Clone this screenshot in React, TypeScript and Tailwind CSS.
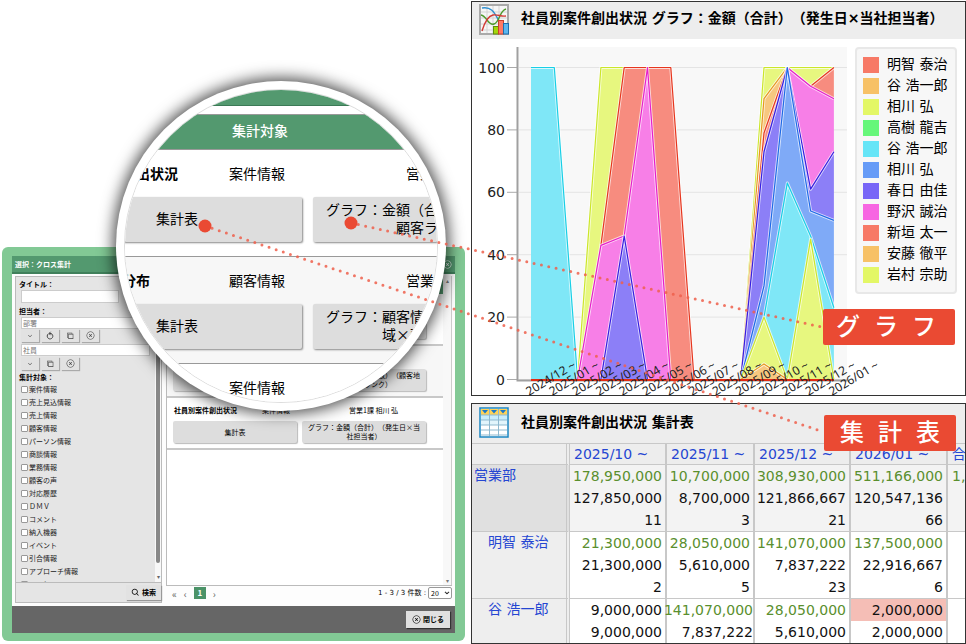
import { IoIosArrowDown } from "react-icons/io";
import { BiSearch } from "react-icons/bi";
import { VscChromeRestore } from "react-icons/vsc";
import { RxCrossCircled } from "react-icons/rx";

const targets = [
  "案件情報",
  "売上見込情報",
  "売上情報",
  "顧客情報",
  "パーソン情報",
  "商談情報",
  "業務情報",
  "顧客の声",
  "対応履歴",
  "ＤＭＶ",
  "コメント",
  "納入機器",
  "イベント",
  "引合情報",
  "アプローチ情報",
  "アンケート",
];

const reports = [
  {
    name: "顧客別案件創出状況",
    kind: "案件情報",
    owner: "営業1課 相川 弘",
    graph: ["グラフ：金額（合計）（当社担当×", "顧客ランク）"],
  },
  {
    name: "顧客ランク分布",
    kind: "顧客情報",
    owner: "営業1課 相川 弘",
    graph: ["グラフ：顧客情報（件数）（顧客地", "域×顧客ランク）"],
  },
  {
    name: "社員別案件創出状況",
    kind: "案件情報",
    owner: "営業1課 相川 弘",
    graph: ["グラフ：金額（合計）（発生日×当", "社担当者）"],
  },
];

const legend = [
  ["明智 泰治", "#f77966"],
  ["谷 浩一郎", "#f7c166"],
  ["相川 弘", "#e3f766"],
  ["高樹 龍吉", "#66f77a"],
  ["谷 浩一郎", "#66e5f7"],
  ["相川 弘", "#669bf7"],
  ["春日 由佳", "#7866f7"],
  ["野沢 誠治", "#f766e2"],
  ["新垣 太一", "#f77966"],
  ["安藤 徹平", "#f7c166"],
  ["岩村 宗助", "#e3f766"],
];

const months = [
  "2024/12", "2025/01", "2025/02", "2025/03", "2025/04", "2025/05", "2025/06",
  "2025/07", "2025/08", "2025/09", "2025/10", "2025/11", "2025/12", "2026/01",
];

type Point = [number, number];
type Area = { fill: string; stroke: string; top: Point[]; bottom: Point[] };

// top = upper edge (stroked), bottom = lower edge, both left to right
const areas: Area[] = [
  { fill: "#7fe7f7", stroke: "#18cfe6", top: [[0, 100], [1, 100], [2, 0]], bottom: [[0, 0], [2, 0]] },
  { fill: "#e7f77f", stroke: "#cbe62a", top: [[2, 0], [3, 100], [4, 100]], bottom: [[2, 0], [3, 43], [4, 100]] },
  { fill: "#f78c7f", stroke: "#e6361e", top: [[3, 43], [4, 100], [6, 100], [7, 0]], bottom: [[3, 43], [4, 46], [5, 100], [6, 0], [7, 0]] },
  { fill: "#f77fe7", stroke: "#e61ecb", top: [[2, 0], [3, 43], [4, 46], [5, 100], [6, 0]], bottom: [[2, 0], [6, 0]] },
  { fill: "#8c7ff7", stroke: "#361ee0", top: [[3, 0], [4, 46], [5, 0]], bottom: [[3, 0], [5, 0]] },
  { fill: "#e7f77f", stroke: "#cbe62a", top: [[9, 0], [10, 100], [13, 100]], bottom: [[9, 0], [10, 90], [11, 100], [12, 94], [13, 100]] },
  { fill: "#f7c87f", stroke: "#e6971e", top: [[9, 0], [10, 90], [11, 100]], bottom: [[9, 0], [10, 79], [11, 100]] },
  { fill: "#f78c7f", stroke: "#e6361e", top: [[9, 0], [10, 79], [11, 100]], bottom: [[9, 0], [10, 73], [11, 100]] },
  { fill: "#f78c7f", stroke: "#e6361e", top: [[12, 94], [13, 100]], bottom: [[12, 94], [13, 90]] },
  { fill: "#f77fe7", stroke: "#e61ecb", top: [[11, 100], [12, 94], [13, 90]], bottom: [[11, 100], [12, 61], [13, 73]] },
  { fill: "#8c7ff7", stroke: "#361ee0", top: [[9, 0], [10, 73], [11, 100], [12, 61], [13, 73]], bottom: [[9, 0], [10, 30], [11, 100], [12, 54], [13, 51]] },
  { fill: "#7faaf7", stroke: "#1e6ae6", top: [[9, 0], [10, 30], [11, 100], [12, 54], [13, 51]], bottom: [[9, 0], [10, 20], [11, 63], [12, 46], [13, 23]] },
  { fill: "#7fe7f7", stroke: "#18cfe6", top: [[10, 20], [11, 63], [12, 46], [13, 23]], bottom: [[10, 20], [11, 0], [12, 45], [13, 0]] },
  { fill: "#e7f77f", stroke: "#cbe62a", top: [[9, 0], [10, 20], [11, 0], [12, 45], [13, 0]], bottom: [[9, 0], [13, 0]] },
  { fill: "#f7c87f", stroke: "#e6971e", top: [[9, 0], [10, 5], [11, 0]], bottom: [[9, 0], [11, 0]] },
];

const px = (i: number) => 531 + i * 23.3;
const py = (v: number) => 379.5 - v * 3.12;
const toPoints = (pts: Point[]) => pts.map(([i, v]) => `${px(i)},${py(v)}`).join(" ");

const columns = ["2025/10 ~", "2025/11 ~", "2025/12 ~", "2026/01 ~"];
const rows = [
  {
    name: "営業部",
    cells: [
      ["178,950,000", "127,850,000", "11"],
      ["10,700,000", "8,700,000", "3"],
      ["308,930,000", "121,866,667", "21"],
      ["511,166,000", "120,547,136", "66"],
    ],
  },
  {
    name: "明智 泰治",
    cells: [
      ["21,300,000", "21,300,000", "2"],
      ["28,050,000", "5,610,000", "5"],
      ["141,070,000", "7,837,222", "23"],
      ["137,500,000", "22,916,667", "6"],
    ],
  },
  {
    name: "谷 浩一郎",
    cells: [
      ["9,000,000", "9,000,000"],
      ["141,070,000", "7,837,222"],
      ["28,050,000", "5,610,000"],
      ["2,000,000", "2,000,000"],
    ],
  },
];

function ReportRow({ report, large, shaded }: { report: (typeof reports)[0]; large?: boolean; shaded?: boolean }) {
  const bg = shaded ? "bg-[#f7f7f7]" : "bg-white";
  const button = "shrink-0 flex flex-col items-center justify-center whitespace-nowrap rounded-xs bg-[#ddd] text-black";
  if (large) {
    return (
      <div className={`${bg} border-b border-[#999] pt-3 pb-[14px] pl-[14px] text-sm`}>
        <div className="grid grid-cols-[177px_177px_1fr] leading-[22px] whitespace-nowrap">
          <b>{report.name}</b>
          <span>{report.kind}</span>
          <span>{report.owner}</span>
        </div>
        <div className="mt-[13px] flex gap-[11px]">
          <button className={`${button} h-[45px] w-[250px] pb-[4px] shadow-[1px_1px_2px_#888]`}>集計表</button>
          <button className={`${button} h-[45px] w-[250px] pb-[4px] leading-[18px] shadow-[1px_1px_2px_#888]`}>
            {report.graph.map((line) => <span key={line}>{line}</span>)}
          </button>
        </div>
      </div>
    );
  }
  return (
    <div className={`${bg} border-b-2 border-[#c8c8c8] pt-[7px] pb-[5px] pl-[6px]`}>
      <div className="grid grid-cols-[88px_87px_1fr] pl-px leading-[11px] whitespace-nowrap">
        <b>{report.name}</b>
        <span>{report.kind}</span>
        <span>{report.owner}</span>
      </div>
      <div className="mt-[5px] flex gap-[5px]">
        <button className={`${button} h-[22px] w-[124px] shadow-[1px_1px_1px_#bbb]`}>集計表</button>
        <button className={`${button} h-[22px] w-[124px] leading-[9px] shadow-[1px_1px_1px_#bbb]`}>
          {report.graph.map((line) => <span key={line}>{line}</span>)}
        </button>
      </div>
    </div>
  );
}

function ToolButton({ label, children }: { label: string; children: React.ReactNode }) {
  return (
    <button aria-label={label} className="flex h-[13px] w-[18px] items-center justify-center bg-[#e2e2e2] text-[9px] text-[#444] shadow-[1px_1px_1px_#aaa]">
      {children}
    </button>
  );
}

function UndoIcon() {
  return (
    <svg viewBox="0 0 8 9" className="h-[9px] w-2" fill="none" stroke="currentColor">
      <path d="M2.200 3A2.800 2.800 0 1 0 5 2.500H3.200M4.600 0.800L3 2.500L4.600 4.200" />
    </svg>
  );
}

function SearchPanel() {
  return (
    <form className="flex h-[327px] w-[147px] shrink-0 flex-col border border-[#bbb] bg-[#e5e5e5]" onSubmit={(e) => e.preventDefault()}>
      <div className="flex min-h-0 flex-1 overflow-hidden">
        <div className="flex-1 pt-[2px] pl-[3px]">
          <label htmlFor="title" className="block leading-[11px] font-bold">タイトル：</label>
          <div className="pl-[2px]">
            <input id="title" className="block h-[13px] w-[98px] border border-[#ccc] bg-white px-px outline-none" />
          </div>
          <label htmlFor="dept" className="mt-[3px] block leading-[11px] font-bold">担当者：</label>
          <div className="pl-[2px]">
            <input id="dept" placeholder="部署" className="block h-[12px] w-[129px] border border-[#ccc] bg-white px-px placeholder:text-[#777]" />
            <div className="flex gap-[2px]">
              <ToolButton label="部署を選ぶ"><IoIosArrowDown className="size-[6px]" /></ToolButton>
              <ToolButton label="戻す"><UndoIcon /></ToolButton>
              <ToolButton label="部署を参照"><VscChromeRestore className="-scale-x-100" /></ToolButton>
              <ToolButton label="部署を消す"><RxCrossCircled /></ToolButton>
            </div>
            <input aria-label="社員" placeholder="社員" className="mt-[2px] block h-[12px] w-[129px] border border-[#ccc] bg-white px-px placeholder:text-[#777]" />
            <div className="mt-px flex gap-[2px]">
              <ToolButton label="社員を選ぶ"><IoIosArrowDown className="size-[6px]" /></ToolButton>
              <ToolButton label="社員を参照"><VscChromeRestore className="-scale-x-100" /></ToolButton>
              <ToolButton label="社員を消す"><RxCrossCircled /></ToolButton>
            </div>
          </div>
          <p className="mt-[2px] leading-[11px] font-bold">集計対象：</p>
          <div className="pl-[2px]">
            {targets.map((t) => (
              <label key={t} className="flex h-[13px] items-center gap-px text-[#222]">
                <input type="checkbox" className="size-[7px] shrink-0 appearance-none rounded-[1px] border border-[#999] bg-white" />
                {t}
              </label>
            ))}
          </div>
        </div>
        <div className="flex w-[6px] flex-col items-center bg-[#f8f8f8]">
          <div className="mt-2 w-1 flex-1 rounded-full bg-[#888]" />
          <span className="h-[19px] pt-[9px] text-[6px] leading-[10px] text-[#666]">▾</span>
        </div>
      </div>
      <div className="flex h-[20px] items-center justify-end border-t border-[#bbb]">
        <button className="flex h-[15px] w-[35px] items-center justify-center gap-[2px] bg-[#e2e2e2] font-bold shadow-[1px_1px_1px_#999]">
          <BiSearch className="size-[9px]" />検索
        </button>
      </div>
    </form>
  );
}

function SelectDialog() {
  return (
    <section className="rounded-md bg-[#82c995] px-[10px] pt-[9px] pb-[8px] text-[7px] text-black">
      <header className="flex h-[18px] items-center justify-between border-b-2 border-[#40805b] bg-[#53996f] px-[3px] font-bold text-white">
        選択：クロス集計
        <RxCrossCircled className="size-[9px]" />
      </header>
      <div className="flex gap-[4px] bg-[#fdfdfd] px-[3px] pt-[2px] pb-[3px]">
        <SearchPanel />
        <div className="min-w-0 flex-1">
          <div className="flex h-[310px] border-b border-l border-[#bbb] bg-white">
            <div className="min-w-0 flex-1">
              <div className="grid h-[18px] grid-cols-[88px_1fr] items-center bg-[#53996f] pl-[7px] text-white">
                <span>タイトル</span>
                <span>集計対象</span>
              </div>
              {reports.map((r, i) => <ReportRow key={i} report={r} shaded={i === 1} />)}
            </div>
            <div className="flex w-[9px] flex-col items-center justify-between border-r border-[#ccc] bg-[#f8f8f8] text-[6px] leading-[9px] text-[#777]">
              <span>▴</span>
              <span>▾</span>
            </div>
          </div>
          <div className="flex h-[14px] items-center pl-[6px]">
            <nav className="flex items-center gap-[7px] text-[10px] text-[#666]">
              <a href="#">«</a>
              <a href="#">‹</a>
              <a href="#" className="flex size-[12px] items-center justify-center bg-[#4b9368] text-[8px] font-bold text-white">1</a>
              <a href="#">›</a>
            </nav>
            <label htmlFor="count" className="ml-auto font-['DejaVu_Sans','Noto_Sans_CJK_JP',sans-serif]">1 - 3 / 3 件数 :</label>
            <div className="relative ml-[2px]">
              <select id="count" className="block h-[12px] w-[24px] appearance-none rounded-xs border border-[#999] bg-white pl-[2px] leading-[10px]">
                <option>20</option>
              </select>
              <IoIosArrowDown className="pointer-events-none absolute top-[3px] right-[2px] size-[6px] stroke-[40]" />
            </div>
          </div>
        </div>
      </div>
      <footer className="flex h-[27px] items-center justify-end bg-[#666] pr-[5px]">
        <button className="flex h-[17px] w-[44px] items-center justify-center gap-[2px] bg-[#e0e0e0] font-bold shadow-[1px_1px_1px_#333]">
          <RxCrossCircled className="size-[9px]" />閉じる
        </button>
      </footer>
    </section>
  );
}

function Magnifier() {
  return (
    <div className="absolute top-[81px] left-[116px] size-[330px] rounded-full bg-white p-[8px] shadow-[0_0_15px_3px_rgba(0,0,0,0.7)]">
      <div className="size-full overflow-hidden rounded-full border border-[#ddd] bg-white text-black">
        <div className="-ml-[87px] w-[580px]">
          <div className="h-[16px] border-b border-[#3c7a56] bg-[#53996f]" />
          <div className="mt-[8px] grid h-[36px] grid-cols-[177px_1fr] items-center border-y border-[#999] bg-[#53996f] pb-[4px] pl-[17px] text-sm font-medium text-white">
            <span />
            <span>集計対象</span>
          </div>
          {reports.map((r, i) => <ReportRow key={i} report={r} large shaded={i === 1} />)}
        </div>
      </div>
    </div>
  );
}

function ChartIcon() {
  return (
    <svg viewBox="0 0 30 31" className="h-[31px] w-[30px]" fill="none">
      <rect x="1" y="1" width="28" height="29" fill="#f6f6f6" stroke="#aaa" strokeWidth="2" />
      <path d="M2 8h26M2 14h26M2 20h26M2 26h26M8 2v27M14 2v27M20 2v27" stroke="#d4d4d4" />
      <path d="M3 4C13 2 16 10 20 17" stroke="#2f8fd0" strokeWidth="1.4" />
      <path d="M2 11C8 12 9 22 15 20S20 7 27 5" stroke="#4f9a2c" strokeWidth="1.4" />
      <path d="M3 27C6 17 9 12 14 11s8 2 13 1" stroke="#d23a35" strokeWidth="1.4" />
      <rect x="14.500" y="22.500" width="5" height="7.500" fill="#a5d60c" stroke="#5f8f0c" />
      <rect x="19.500" y="16.500" width="5" height="13.500" fill="#ff7a66" stroke="#c9402e" />
      <rect x="24.500" y="19.500" width="5" height="10.500" fill="#5bb7ef" stroke="#1d6fae" />
    </svg>
  );
}

function TableIcon() {
  return (
    <svg viewBox="0 0 30 31" className="h-[31px] w-[30px]" fill="none">
      <rect x="1" y="1" width="28" height="29" fill="#fff" stroke="#1b86c2" strokeWidth="1.5" />
      <rect x="2" y="2" width="26" height="6" fill="#ffd257" />
      <path d="M2 8h26v5H2z" fill="#c9ecfa" />
      <path d="M2 13h26v5H2z" fill="#e2f5fc" />
      <path d="M2 8h26M2 13h26M2 18h26M2 23h26M2 28h26M10.500 2v27M19.500 2v27" stroke="#8fb9cf" />
      <path d="M3 3h6l-3 3.500zM12 3h6l-3 3.500zM21 3h6l-3 3.500z" fill="#1b78c8" />
    </svg>
  );
}

function AreaChart() {
  return (
    <svg viewBox="472 39 380 356" className="relative h-[356px] w-[380px] shrink-0 overflow-visible">
      <rect x="519" y="47" width="328" height="333" fill="#f8f8f8" />
      {[0, 20, 40, 60, 80, 100].map((v) => (
        <g key={v}>
          <path d={`M519 ${py(v)}H847`} stroke="#e4e4e4" />
          <path d={`M507 ${py(v)}H517`} stroke="#aaa" />
          <text x="505" y={py(v) + 5} textAnchor="end" className="fill-[#222] font-['DejaVu_Sans'] text-sm">{v}</text>
        </g>
      ))}
      <path d="M517.500 47V380.500H847" stroke="#a0a0a0" strokeWidth="2" fill="none" />
      {areas.map((a, i) => (
        <g key={i} fill="none" strokeLinejoin="round">
          <polygon points={toPoints([...a.top, ...[...a.bottom].reverse()])} fill={a.fill} />
          <polyline points={toPoints(a.top)} stroke="#fff" strokeWidth="3" strokeOpacity="0.7" />
          <polyline points={toPoints(a.top)} stroke={a.stroke} strokeWidth="1.2" />
        </g>
      ))}
      <path d="M531 380H834" stroke="#e32a12" strokeWidth="2" />
      {months.map((m, i) => (
        <text key={m} transform={`translate(${px(i) - 2} 396) rotate(-31)`} className="fill-[#222] font-['Noto_Sans'] text-xs">
          {m} ~
        </text>
      ))}
    </svg>
  );
}

function ChartPanel() {
  return (
    <section className="border border-[#333] bg-white">
      <header className="flex h-[37px] items-center gap-3 bg-[#ededed] pb-[2px] pl-[7px]">
        <ChartIcon />
        <h2 className="pb-[3px] text-sm font-bold whitespace-nowrap">社員別案件創出状況 グラフ：金額（合計）（発生日×当社担当者）</h2>
      </header>
      <div className="flex items-start gap-[3px]">
        <AreaChart />
        <ul className="mt-2 mr-2 flex-1 rounded border-2 border-[#e8e8e8] bg-[#f7f7f7] px-[6px] pt-[5px] pb-[7px]">
          {legend.map(([name, color], i) => (
            <li key={i} className="flex h-[21px] items-center gap-2 text-sm whitespace-nowrap">
              <span className="size-4 shrink-0" style={{ backgroundColor: color }} />
              <span className="pb-[2px]">{name}</span>
            </li>
          ))}
        </ul>
      </div>
    </section>
  );
}

function SummaryTable() {
  return (
    <section className="overflow-hidden border border-[#333] bg-white">
      <header className="flex h-[39px] items-center gap-3 bg-[#ededed] pb-[2px] pl-[7px]">
        <TableIcon />
        <h2 className="pb-[2px] text-sm font-bold">社員別案件創出状況 集計表</h2>
      </header>
      <table className="w-full table-fixed border-separate border-spacing-0 border-t border-[#c8c8c8] text-sm whitespace-nowrap">
        <colgroup>
          <col className="w-[98px]" />
          <col className="w-[97px]" />
          <col className="w-[88px]" />
          <col className="w-[96px]" />
          <col className="w-[97px]" />
          <col />
        </colgroup>
        <thead>
          <tr className="bg-[#ededed] text-left leading-[20px] text-[#2546d2]">
            <td className="border-r-4 border-b border-double border-[#c8c8c8]" />
            {columns.map((c) => (
              <th key={c} scope="col" className="border-r-2 border-b border-[#c8c8c8] p-0 pl-1 font-normal">{c}</th>
            ))}
            <th scope="col" className="overflow-hidden border-b border-[#c8c8c8] p-0 pl-1 font-normal">合計</th>
          </tr>
        </thead>
        <tbody>
          {rows.map((r, ri) => {
            const line = ri < 2 ? "border-b" : "";
            return (
              <tr key={r.name} className={ri === 0 ? "bg-[#f3f3f3]" : "bg-white"}>
                <th
                  scope="row"
                  className={`${line} border-r-4 border-double border-[#c8c8c8] p-0 text-left align-top leading-[20px] font-normal text-[#2546d2] ${ri === 0 ? "bg-[#e0e0e0] pl-[2px]" : "bg-[#eee] pl-4"}`}
                >
                  {r.name}
                </th>
                {r.cells.map((lines, ci) => (
                  <td key={ci} className={`${line} border-r-2 border-[#c8c8c8] p-0 leading-[22px]`}>
                    {lines.map((n, li) => {
                      const plain = ri === 2 && (ci === 0 || ci === 3);
                      const pink = ri === 2 && ci === 3 && li === 0;
                      return (
                        <div
                          key={li}
                          className={`flex justify-end ${ri === 2 && ci === 1 ? "" : "pr-[3px]"} ${li === 0 && !plain ? "text-[#5a8f2e]" : "text-[#111]"} ${pink ? "bg-[#f5beb6]" : ""}`}
                        >
                          {n}
                        </div>
                      );
                    })}
                  </td>
                ))}
                <td className={`${line} overflow-hidden border-[#c8c8c8] p-0 pl-1 align-top leading-[22px] text-[#5a8f2e]`}>{ri === 0 ? "1," : ""}</td>
              </tr>
            );
          })}
        </tbody>
      </table>
    </section>
  );
}

function Callouts() {
  const tag = "absolute flex h-[36px] w-[132px] items-center justify-center gap-[14px] rounded-xs bg-[#ea4a33] text-2xl font-medium text-white";
  return (
    <>
      <svg className="pointer-events-none absolute top-0 left-0 h-[460px] w-[830px]" fill="none">
        <g stroke="#ee5f4b" strokeWidth="3" strokeLinecap="round" strokeDasharray="0 7.5" strokeOpacity="0.85">
          <path d="M351 223L822 327" />
          <path d="M205 226L824 432" />
        </g>
        <circle cx="205" cy="226" r="6.500" fill="#ea4a33" />
        <circle cx="351" cy="223" r="6.500" fill="#ea4a33" />
      </svg>
      <div className={`${tag} top-[309px] left-[823px] pr-[6px]`}>
        <span>グ</span><span>ラ</span><span>フ</span>
      </div>
      <div className={`${tag} top-[415px] left-[824px]`}>
        <span>集</span><span>計</span><span>表</span>
      </div>
    </>
  );
}

export default function App() {
  return (
    <main className="relative flex items-start gap-[6px] overflow-hidden bg-white font-['DejaVu_Sans','Noto_Sans_CJK_JP',sans-serif] text-black [text-spacing-trim:space-all]">
      <div className="relative w-[465px] shrink-0 pt-[247px] pl-[2px] font-['Noto_Sans_CJK_JP',sans-serif]">
        <SelectDialog />
        <Magnifier />
      </div>
      <div className="flex min-w-0 flex-1 flex-col gap-[7px] pt-px">
        <ChartPanel />
        <SummaryTable />
      </div>
      <Callouts />
    </main>
  );
}
